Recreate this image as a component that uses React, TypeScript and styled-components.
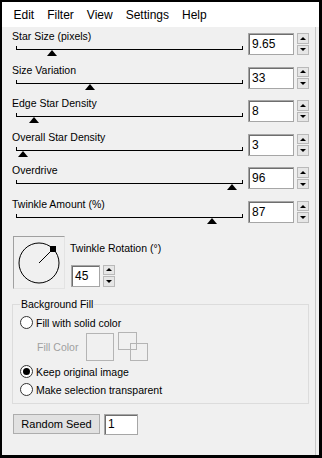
import React from "react";
import styled, { createGlobalStyle } from "styled-components";

interface SliderSetting {
  label: string;
  value: string;
  min: number;
  max: number;
}

const sliders: SliderSetting[] = [
  { label: "Star Size (pixels)", value: "9.65", min: 1, max: 55 },
  { label: "Size Variation", value: "33", min: 0, max: 100 },
  { label: "Edge Star Density", value: "8", min: 0, max: 100 },
  { label: "Overall Star Density", value: "3", min: 0, max: 100 },
  { label: "Overdrive", value: "96", min: 0, max: 100 },
  { label: "Twinkle Amount (%)", value: "87", min: 0, max: 100 },
];

const menu = ["Edit", "Filter", "View", "Settings", "Help"];

const Spinner: React.FC = () => (
  <SpinBox>
    <SpinButton>
      <Arrow $dir="up" />
    </SpinButton>
    <SpinButton>
      <Arrow $dir="down" />
    </SpinButton>
  </SpinBox>
);

const Radio: React.FC<{ label: string; checked?: boolean }> = ({
  label,
  checked,
}) => (
  <RadioRow>
    <RadioCircle $checked={!!checked} />
    <span>{label}</span>
  </RadioRow>
);

const App: React.FC = () => {
  return (
    <>
      <GlobalStyle />
      <Window>
        <MenuBar>
          {menu.map((m) => (
            <MenuItem key={m}>{m}</MenuItem>
          ))}
        </MenuBar>
        <Panel>
          {sliders.map((s) => {
            const pct = (parseFloat(s.value) - s.min) / (s.max - s.min);
            return (
              <SliderRow key={s.label}>
                <SliderCol>
                  <Label>{s.label}</Label>
                  <Track>
                    <Thumb style={{ left: `${pct * 100}%` }} />
                  </Track>
                </SliderCol>
                <NumInput $width={46}>{s.value}</NumInput>
                <Spinner />
              </SliderRow>
            );
          })}

          <RotationRow>
            <Dial>
              <svg width="50" height="51" viewBox="0 0 50 51">
                <circle cx="25" cy="26" r="20" fill="none" stroke="#000" strokeWidth="1" />
                <line x1="25" y1="26" x2="39" y2="12" stroke="#000" strokeWidth="1" />
                <rect x="36" y="9" width="6" height="6" fill="#000" />
              </svg>
            </Dial>
            <RotationControls>
              <Label>Twinkle Rotation (°)</Label>
              <InputLine>
                <NumInput $width={29}>45</NumInput>
                <Spinner />
              </InputLine>
            </RotationControls>
          </RotationRow>

          <GroupBox>
            <legend>Background Fill</legend>
            <Radio label="Fill with solid color" />
            <FillRow>
              <FillLabel>Fill Color</FillLabel>
              <Swatch />
              <svg width="31" height="30" viewBox="0 0 31 30">
                <rect x="0.5" y="0.5" width="18" height="17" fill="none" stroke="#b4b4b4" />
                <rect x="12.5" y="11.5" width="17" height="17" fill="none" stroke="#b4b4b4" />
              </svg>
            </FillRow>
            <Radio label="Keep original image" checked />
            <Radio label="Make selection transparent" />
          </GroupBox>

          <SeedRow>
            <PushButton>Random Seed</PushButton>
            <NumInput $width={34} $height={21}>1</NumInput>
          </SeedRow>
        </Panel>
      </Window>
    </>
  );
};

const GlobalStyle = createGlobalStyle`
  html, body {
    margin: 0;
    padding: 0;
    background: #ffffff;
  }

  body {
    font-family: "Liberation Sans", Arial, sans-serif;
    color: #000;
  }
`;

const Window = styled.div`
  width: 322px;
  height: 458px;
  box-sizing: border-box;
  border-style: solid;
  border-color: #000;
  border-width: 2px 3px 3px 2px;
  background: #f0f0f0;
  display: flex;
  flex-direction: column;
`;

const MenuBar = styled.div`
  height: 25px;
  flex: 0 0 25px;
  background: #fff;
  display: flex;
  align-items: center;
  padding-left: 5px;
  font-size: 12px;
`;

const MenuItem = styled.span`
  padding: 0 6.5px;
  line-height: 18px;
`;

const Panel = styled.div`
  flex: 1;
  margin-right: 3px;
  border-right: 1px solid #c8c8c8;
  padding: 6px 0 0 10px;
  font-size: 10.5px;
`;

const SliderRow = styled.div`
  display: flex;
  align-items: flex-start;
  height: 33.6px;
`;

const SliderCol = styled.div`
  flex: 0 0 236px;
  display: flex;
  flex-direction: column;
`;

const Label = styled.div`
  line-height: 13px;
  height: 13px;
  margin-top: -3px;
  white-space: nowrap;
`;

const Track = styled.div`
  position: relative;
  margin: 3px 5px 0 4px;
  height: 3px;
  border: 1px solid #000;
  border-top: 0;
`;

const Thumb = styled.div`
  position: absolute;
  top: 4px;
  width: 0;
  height: 0;
  margin-left: -6px;
  border-left: 5.5px solid transparent;
  border-right: 5.5px solid transparent;
  border-bottom: 6px solid #000;
`;

const NumInput = styled.div<{ $width: number; $height?: number }>`
  width: ${({ $width }) => $width}px;
  height: ${({ $height }) => $height ?? 22}px;
  box-sizing: border-box;
  background: #fff;
  border: 1px solid #a6a6a6;
  box-shadow: inset 1px 1px 0 #6e6e6e;
  padding: 0 0 0 3px;
  font-size: 12px;
  line-height: ${({ $height }) => ($height ?? 22) - 2}px;
  flex-shrink: 0;
`;

const SpinBox = styled.div`
  margin-left: 3px;
  width: 12px;
  height: 22px;
  display: flex;
  flex-direction: column;
  gap: 1px;
`;

const SpinButton = styled.div`
  flex: 1;
  box-sizing: border-box;
  border: 1px solid #b9b9b9;
  background: #e6e6e6;
  display: flex;
  align-items: center;
  justify-content: center;
`;

const Arrow = styled.span<{ $dir: "up" | "down" }>`
  width: 0;
  height: 0;
  border-left: 3px solid transparent;
  border-right: 3px solid transparent;
  ${({ $dir }) =>
    $dir === "up"
      ? "border-bottom: 3px solid #000;"
      : "border-top: 3px solid #000;"}
`;

const RotationRow = styled.div`
  display: flex;
  margin-top: 1px;
`;

const Dial = styled.div`
  margin-left: 1px;
  width: 52px;
  height: 53px;
  box-sizing: border-box;
  border: 1px solid;
  border-color: #a0a0a0 #e3e3e3 #e3e3e3 #a0a0a0;
  display: flex;
  align-items: center;
  justify-content: center;
`;

const RotationControls = styled.div`
  margin-left: 5px;
  padding-top: 9px;
  display: flex;
  flex-direction: column;
`;

const InputLine = styled.div`
  display: flex;
  margin: 10px 0 0 1px;
`;

const GroupBox = styled.fieldset`
  margin: 9px 6px 0 0;
  padding: 3px 7px 4px 7px;
  border: 1px solid #dcdcdc;
  border-radius: 0;
  min-width: 0;

  legend {
    padding: 0 1px;
    line-height: 13px;
  }
`;

const RadioRow = styled.div`
  display: flex;
  align-items: center;
  height: 18px;
  gap: 3px;
`;

const RadioCircle = styled.span<{ $checked: boolean }>`
  width: 13px;
  height: 13px;
  box-sizing: border-box;
  border-radius: 50%;
  border: 1px solid #333;
  background: #fff;
  display: flex;
  align-items: center;
  justify-content: center;

  &::after {
    content: "";
    width: 7px;
    height: 7px;
    border-radius: 50%;
    background: #000;
    display: ${({ $checked }) => ($checked ? "block" : "none")};
  }
`;

const FillRow = styled.div`
  display: flex;
  align-items: center;
  height: 31px;
  padding-left: 17px;
`;

const FillLabel = styled.span`
  color: #a0a0a0;
  width: 49px;
`;

const Swatch = styled.div`
  width: 28px;
  height: 28px;
  box-sizing: border-box;
  border: 1px solid #b4b4b4;
  margin-right: 4px;
`;

const SeedRow = styled.div`
  display: flex;
  gap: 4px;
  margin: 10px 0 0 1px;
`;

const PushButton = styled.div`
  width: 87px;
  height: 20px;
  box-sizing: border-box;
  border: 1px solid #adadad;
  background: #e1e1e1;
  font-size: 11px;
  line-height: 18px;
  text-align: center;
`;

export default App;
